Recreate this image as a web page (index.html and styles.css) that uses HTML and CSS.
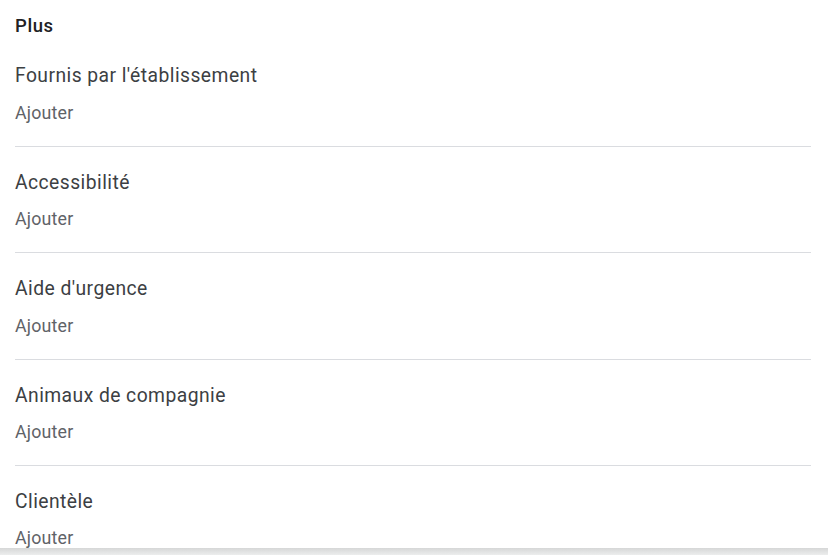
FILE: index.html
```html
<!DOCTYPE html>
<html lang="fr">
<head>
<meta charset="utf-8">
<title>Plus</title>
<link rel="stylesheet" href="styles.css">
</head>
<body>
<div class="page">
  <div class="content">
    <h2 class="section-title">Plus</h2>
    <ul class="attr-list">
      <li class="attr-item">
        <div class="attr-name">Fournis par l'établissement</div>
        <div class="attr-action">Ajouter</div>
      </li>
      <li class="attr-item">
        <div class="attr-name">Accessibilité</div>
        <div class="attr-action">Ajouter</div>
      </li>
      <li class="attr-item">
        <div class="attr-name">Aide d'urgence</div>
        <div class="attr-action">Ajouter</div>
      </li>
      <li class="attr-item">
        <div class="attr-name">Animaux de compagnie</div>
        <div class="attr-action">Ajouter</div>
      </li>
      <li class="attr-item">
        <div class="attr-name">Clientèle</div>
        <div class="attr-action">Ajouter</div>
      </li>
    </ul>
  </div>
  <div class="bottom-bar"></div>
</div>
</body>
</html>
```
FILE: styles.css
```css
html, body {
  margin: 0;
  padding: 0;
  background: #ffffff;
}

body {
  font-family: Roboto, "Noto Sans", "Liberation Sans", sans-serif;
}

.page {
  width: 828px;
  height: 555px;
  display: flex;
  flex-direction: column;
  overflow: hidden;
}

.content {
  flex: 1;
  min-height: 0;
  overflow: hidden;
  padding: 0 17px 0 15px;
}

.section-title {
  margin: 0;
  padding: 14px 0 2.6px;
  font-size: 18.5px;
  line-height: 24px;
  font-weight: 500;
  letter-spacing: 0.6px;
  color: #202124;
}

.attr-list {
  list-style: none;
  margin: 0;
  padding: 0;
}

.attr-item {
  padding: 23.9px 0 22.2px;
  border-bottom: 1px solid #dadce0;
}

.attr-name {
  font-size: 19.3px;
  line-height: 24px;
  letter-spacing: 0.45px;
  color: #3c4043;
}

.attr-action {
  margin-top: 13.3px;
  font-size: 17.8px;
  line-height: 22px;
  letter-spacing: 0.2px;
  color: #5f6368;
}

.bottom-bar {
  flex: 0 0 7px;
  background: linear-gradient(#d6d7d7, #eceded);
}
```
